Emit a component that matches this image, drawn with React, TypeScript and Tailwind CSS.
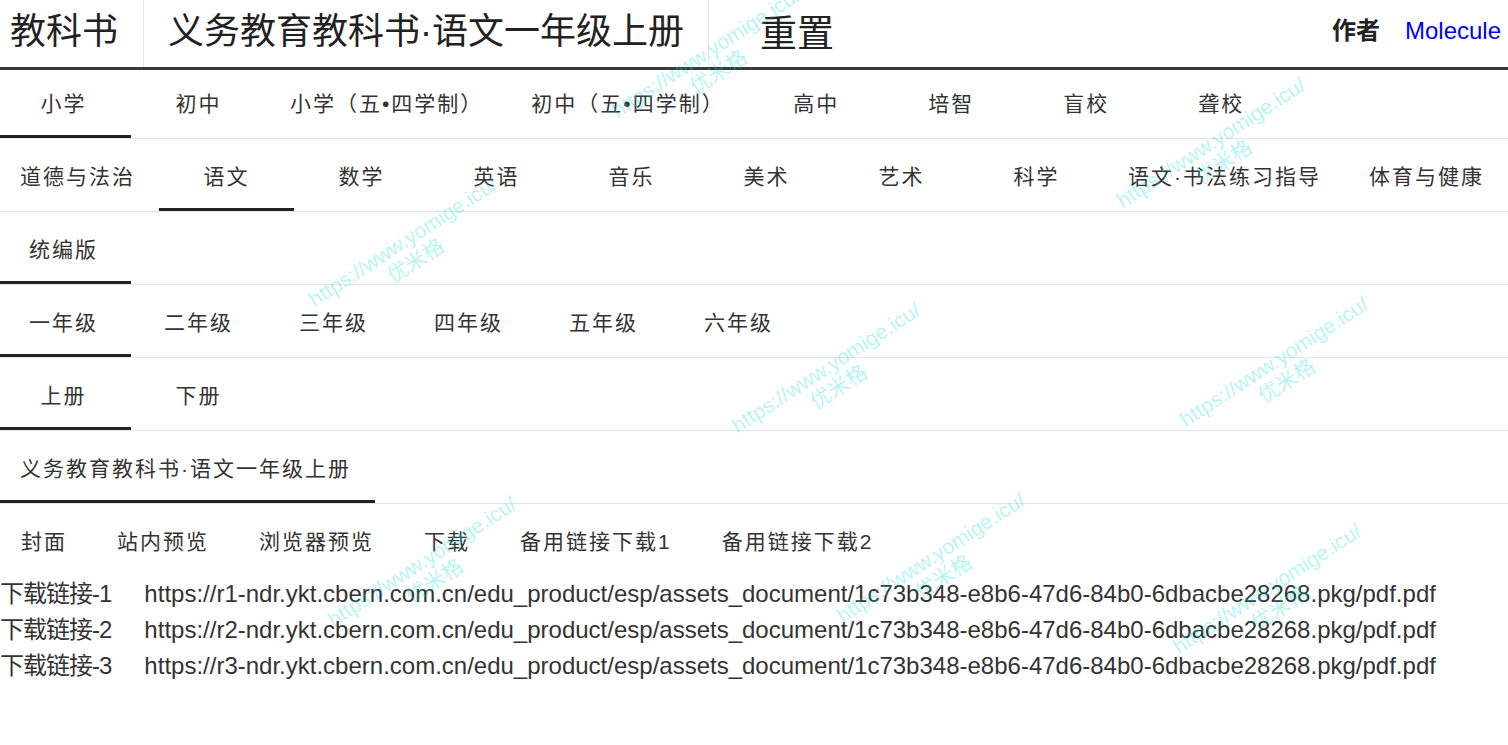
import React from 'react';

const levels = ['小学', '初中', '小学（五•四学制）', '初中（五•四学制）', '高中', '培智', '盲校', '聋校'];
const subjects = ['道德与法治', '语文', '数学', '英语', '音乐', '美术', '艺术', '科学', '语文·书法练习指导', '体育与健康'];
const versions = ['统编版'];
const grades = ['一年级', '二年级', '三年级', '四年级', '五年级', '六年级'];
const volumes = ['上册', '下册'];
const books = ['义务教育教科书·语文一年级上册'];
const actions = ['封面', '站内预览', '浏览器预览', '下载', '备用链接下载1', '备用链接下载2'];

const links = [1, 2, 3].map(
  (n) =>
    `https://r${n}-ndr.ykt.cbern.com.cn/edu_product/esp/assets_document/1c73b348-e8b6-47d6-84b0-6dbacbe28268.pkg/pdf.pdf`
);

// watermark centres, copied by eye from the page
const marks = [
  'left-[712px] top-[62px]',
  'left-[409px] top-[251px]',
  'left-[1217px] top-[152px]',
  'left-[832px] top-[377px]',
  'left-[1280px] top-[371px]',
  'left-[428px] top-[571px]',
  'left-[937px] top-[567px]',
  'left-[1273px] top-[598px]',
];

function TabRow({ items, active, first = false }: { items: string[]; active: number; first?: boolean }) {
  return (
    <div className={`${first ? 'h-[69px]' : 'h-[73px]'} border-b border-[#e5e5e5] overflow-hidden`}>
      <div className="flex h-full -ml-1 whitespace-nowrap">
        {items.map((item, i) => (
          <div
            key={item}
            className={`h-full min-w-[135px] px-6 ${first ? 'pt-[3px]' : 'pt-[7px]'} flex items-center justify-center text-[21px] tracking-[2px] text-[#333] border-b-[3px] ${
              i === active ? 'border-[#222]' : 'border-transparent'
            }`}
          >
            {item}
          </div>
        ))}
      </div>
    </div>
  );
}

export default function App() {
  return (
    <div className='relative w-full min-h-[745px] overflow-hidden bg-white [font-family:"Liberation_Sans","Noto_Sans_CJK_SC",sans-serif]'>
      <header className="flex h-[70px] items-center border-b-[3px] border-[#3b3b3b] text-[#222] whitespace-nowrap">
        <div className="h-full flex items-center pb-[4px] pl-[10px] pr-[25px] border-r border-[#e8e8e8] text-[36px]">教科书</div>
        <div className="h-full flex items-center pb-[4px] px-6 border-r border-[#e8e8e8] text-[36px]">义务教育教科书·语文一年级上册</div>
        <div className="ml-[51px] mt-[2px] text-[37px]">重置</div>
        <div className="ml-auto mr-[7px] mb-[5px] flex items-center gap-[25px] text-[24px]">
          <span className="font-bold">作者</span>
          <span className="text-[#0000ff]">Molecule</span>
        </div>
      </header>

      <TabRow items={levels} active={0} first />
      <TabRow items={subjects} active={1} />
      <TabRow items={versions} active={0} />
      <TabRow items={grades} active={0} />
      <TabRow items={volumes} active={0} />
      <TabRow items={books} active={0} />

      <div className="h-[72px] flex items-center -ml-1 whitespace-nowrap">
        {actions.map((a) => (
          <div key={a} className="px-[25px] pt-[4px] text-[21px] tracking-[2px] text-[#333]">
            {a}
          </div>
        ))}
      </div>

      <div className="text-[24px] leading-[36px] text-[#333] whitespace-nowrap">
        {links.map((url, i) => (
          <div key={url} className="flex gap-[33px]">
            <span className="tracking-[-1px]">下载链接-{i + 1}</span>
            <span>{url}</span>
          </div>
        ))}
      </div>

      {marks.map((pos) => (
        <div
          key={pos}
          className={`pointer-events-none absolute ${pos} -translate-x-1/2 -translate-y-1/2 -rotate-[33deg] text-center text-[21px] leading-[23px] text-[rgba(0,220,220,0.3)] whitespace-nowrap`}
        >
          <div>https://www.yomige.icu/</div>
          <div>优米格</div>
        </div>
      ))}
    </div>
  );
}
